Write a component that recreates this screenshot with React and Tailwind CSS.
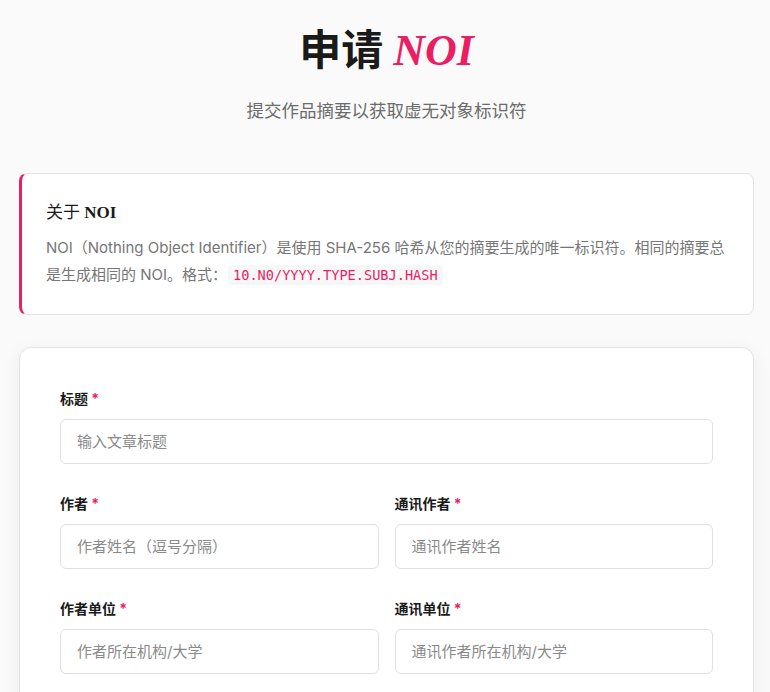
export default function App() {
  const cjk = { fontFamily: 'Inter, "Noto Sans CJK SC", sans-serif' };
  const Label = ({ children }) => (
    <label className="block text-[14px] leading-[21px] font-bold text-[#1a1a1a] mb-[10px]">
      {children} <span className="text-[#e91e63]">*</span>
    </label>
  );
  const Input = ({ placeholder }) => (
    <input
      placeholder={placeholder}
      className="block w-full h-[45px] rounded-[6px] border border-[#e0e0e0] bg-white px-4 text-[15px] text-[#333] placeholder:text-[#8a8a8a] outline-none"
      style={cjk}
    />
  );
  return (
    <div className="min-h-screen bg-[#fafafa] pl-[19px] pr-[16px] pt-[26px] pb-10" style={cjk}>
      <h1 className="text-center text-[42px] leading-[48px] font-bold text-[#1a1a1a]">
        <span style={{ fontFamily: '"Liberation Serif", "Noto Sans CJK SC", serif' }}>申请</span>{" "}
        <span className="italic text-[44px] text-[#e91e63]" style={{ fontFamily: '"Liberation Serif", serif' }}>NOI</span>
      </h1>
      <p className="mt-[23px] text-center text-[17.5px] leading-[26px] text-[#6b6b6b]">
        提交作品摘要以获取虚无对象标识符
      </p>
      <div className="mt-[49px] bg-white border border-[#e3e3e3] border-l-[3px] border-l-[#e91e63] rounded-[8px] pl-6 pr-6 pt-[27px] pb-[25px]">
        <h2
          className="text-[17px] leading-[24px] text-[#1a1a1a]"
          style={{ fontFamily: '"Liberation Serif", "Noto Sans CJK SC", serif' }}
        >
          关于 <span className="font-bold">NOI</span>
        </h2>
        <p className="mt-[9px] text-[15px] leading-[27px] text-[#767676]">
          NOI（Nothing Object Identifier）是使用 SHA-256 哈希从您的摘要生成的唯一标识符。相同的摘要总是生成相同的 NOI。格式：
          <code
            className="ml-[1px] rounded-[4px] bg-[#f7f7f7] px-[5px] py-[2px] text-[13.6px] text-[#e91e63]"
            style={{ fontFamily: '"DejaVu Sans Mono", monospace' }}
          >
            10.N0/YYYY.TYPE.SUBJ.HASH
          </code>
        </p>
      </div>
      <div className="mt-[32px] bg-white border border-[#e3e3e3] rounded-[12px] shadow-[0_4px_20px_rgba(0,0,0,0.06)] p-10">
        <div className="mb-[29px]">
          <Label>标题</Label>
          <Input placeholder="输入文章标题" />
        </div>
        <div className="grid grid-cols-2 gap-x-4 gap-y-[29px]">
          <div>
            <Label>作者</Label>
            <Input placeholder="作者姓名（逗号分隔）" />
          </div>
          <div>
            <Label>通讯作者</Label>
            <Input placeholder="通讯作者姓名" />
          </div>
          <div>
            <Label>作者单位</Label>
            <Input placeholder="作者所在机构/大学" />
          </div>
          <div>
            <Label>通讯单位</Label>
            <Input placeholder="通讯作者所在机构/大学" />
          </div>
        </div>
      </div>
    </div>
  );
}
